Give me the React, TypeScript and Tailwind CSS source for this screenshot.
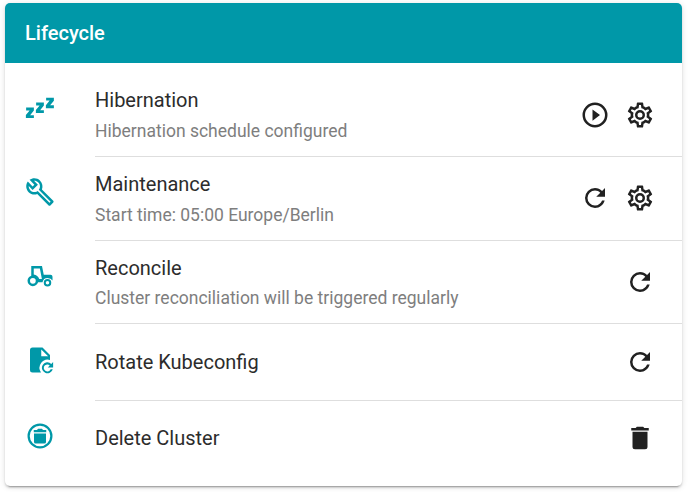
import type { ReactNode } from 'react';

function Icon({ children, className = '' }: { children: ReactNode; className?: string }) {
  return (
    <svg viewBox="0 0 24 24" fill="currentColor" className={`block size-[30px] shrink-0 ${className}`}>
      {children}
    </svg>
  );
}

const Sleep = () => (
  <>
    <path d="M.9 11.6H7.1V14L4.1 17.7H7.1V20H.7V17.6L3.7 13.9H.9Z" />
    <path d="M8.9 7.6H15.1V10L12.1 13.7H15.1V16H8.7V13.6L11.7 9.9H8.9Z" />
    <path d="M16.9 3.7H23.1V6.1L20.1 9.8H23.1V12.1H16.7V9.7L19.7 6H16.9Z" />
  </>
);

const Wrench = () => (
  <path d="M22.61,19L13.53,9.91C14.46,7.57 14,4.81 12.09,2.91C9.79,0.61 6.21,0.4 3.66,2.26L7.5,6.11L6.08,7.52L2.25,3.69C0.39,6.23 0.6,9.82 2.9,12.11C4.76,13.97 7.47,14.46 9.79,13.59L18.9,22.7C19.29,23.09 19.92,23.09 20.31,22.7L22.61,20.4C23,20 23,19.39 22.61,19M19.61,20.59L10.15,11.13C9.54,11.58 8.86,11.85 8.15,11.95C6.79,12.15 5.36,11.74 4.32,10.7C3.37,9.76 2.93,8.5 3,7.26L6.09,10.35L10.33,6.11L7.24,3C8.5,2.95 9.73,3.39 10.68,4.33C11.76,5.41 12.17,6.9 11.92,8.29C11.8,9 11.5,9.66 11.04,10.25L20.5,19.7L19.61,20.59Z" />
);

const Tractor = () => (
  <>
    <path d="M5 4H13.6L15 11H20.4Q22 11 22 12.6V15.5Q20.8 13.5 18 13.5Q14.7 13.5 14 17H10V15Q9.4 12 5 12Z M7 6V10.8Q10.2 11.2 11.4 14.4H13.5L11.9 6Z" fillRule="evenodd" />
    <circle cx="6.3" cy="15.8" r="3.3" fill="none" stroke="currentColor" strokeWidth="2" />
    <circle cx="18" cy="17.3" r="2.2" fill="none" stroke="currentColor" strokeWidth="1.6" />
  </>
);

const FileRefresh = () => (
  <>
    <path d="M6 2H14L20 8V11.9A6.6 6.6 0 0 0 12.8 22H6Q4 22 4 20V4Q4 2 6 2M13 3.5V9H18.5Z" fillRule="evenodd" />
    <path d="M21 15.1A4.4 4.4 0 1 0 22.2 19.3H20.5A2.8 2.8 0 1 1 19.8 16.3L18.2 17.9H22.5V13.6Z" />
  </>
);

const DeleteCircle = () => (
  <>
    <circle cx="12" cy="12" r="9.1" fill="none" stroke="currentColor" strokeWidth="1.8" />
    <path d="M7 7.1H9.6L10.4 6.2H13.6L14.4 7.1H17V9H7ZM7.2 10H16.8V16.8Q16.8 18 15.6 18H8.4Q7.2 18 7.2 16.8Z" />
  </>
);

const Play = () => (
  <path d="M12,20C7.59,20 4,16.41 4,12C4,7.59 7.59,4 12,4C16.41,4 20,7.59 20,12C20,16.41 16.41,20 12,20M12,2A10,10 0 0,0 2,12A10,10 0 0,0 12,22A10,10 0 0,0 22,12A10,10 0 0,0 12,2M10,16.5L16,12L10,7.5V16.5Z" />
);

const Refresh = () => (
  <path d="M17.65,6.35C16.2,4.9 14.21,4 12,4A8,8 0 0,0 4,12A8,8 0 0,0 12,20C15.73,20 18.84,17.45 19.73,14H17.65C16.83,16.33 14.61,18 12,18A6,6 0 0,1 6,12A6,6 0 0,1 12,6C13.66,6 15.14,6.69 16.22,7.78L13,11H20V4L17.65,6.35Z" />
);

const Cog = () => (
  <path d="M12,8A4,4 0 0,1 16,12A4,4 0 0,1 12,16A4,4 0 0,1 8,12A4,4 0 0,1 12,8M12,10A2,2 0 0,0 10,12A2,2 0 0,0 12,14A2,2 0 0,0 14,12A2,2 0 0,0 12,10M10,22C9.75,22 9.54,21.82 9.5,21.58L9.13,18.93C8.5,18.68 7.96,18.34 7.44,17.94L4.95,18.95C4.73,19.03 4.46,18.95 4.34,18.73L2.34,15.27C2.21,15.05 2.27,14.78 2.46,14.63L4.57,12.97L4.5,12L4.57,11L2.46,9.37C2.27,9.22 2.21,8.95 2.34,8.73L4.34,5.27C4.46,5.05 4.73,4.96 4.95,5.05L7.44,6.05C7.96,5.66 8.5,5.32 9.13,5.07L9.5,2.42C9.54,2.18 9.75,2 10,2H14C14.25,2 14.46,2.18 14.5,2.42L14.87,5.07C15.5,5.32 16.04,5.66 16.56,6.05L19.05,5.05C19.27,4.96 19.54,5.05 19.66,5.27L21.66,8.73C21.79,8.95 21.73,9.22 21.54,9.37L19.43,11L19.5,12L19.43,13L21.54,14.63C21.73,14.78 21.79,15.05 21.66,15.27L19.66,18.73C19.54,18.95 19.27,19.04 19.05,18.95L16.56,17.95C16.04,18.34 15.5,18.68 14.87,18.93L14.5,21.58C14.46,21.82 14.25,22 14,22H10M11.25,4L10.88,6.61C9.68,6.86 8.62,7.5 7.85,8.39L5.44,7.35L4.69,8.65L6.8,10.2C6.4,11.37 6.4,12.64 6.8,13.8L4.68,15.36L5.43,16.66L7.86,15.62C8.63,16.5 9.68,17.14 10.87,17.38L11.24,20H12.76L13.13,17.39C14.32,17.14 15.37,16.5 16.14,15.62L18.57,16.66L19.32,15.36L17.2,13.81C17.6,12.64 17.6,11.37 17.2,10.2L19.31,8.65L18.56,7.35L16.15,8.39C15.38,7.5 14.32,6.86 13.12,6.62L12.75,4H11.25Z" />
);

const Trash = () => (
  <path d="M19,4H15.5L14.5,3H9.5L8.5,4H5V6H19M6,19A2,2 0 0,0 8,21H16A2,2 0 0,0 18,19V7H6V19Z" />
);

interface RowProps {
  icon: ReactNode;
  title: string;
  subtitle?: string;
  subtitleGap?: string;
  actions: ReactNode;
  height: string;
  iconPad: string;
  textPad: string;
  actionPad: string;
  last?: boolean;
}

function Row({ icon, title, subtitle, subtitleGap = 'mt-[7px]', actions, height, iconPad, textPad, actionPad, last }: RowProps) {
  return (
    <li className={`flex pl-5 ${height}`}>
      <div className={`w-[70px] shrink-0 text-[#0098a8] ${iconPad}`}>
        <Icon>{icon}</Icon>
      </div>
      <div className={`flex grow justify-between ${last ? '' : 'border-b border-[#dedede]'}`}>
        <div className={textPad}>
          <div className="text-[20px] leading-6 text-[#2c2c2c]">{title}</div>
          {subtitle && <div className={`text-[17.5px] leading-6 text-[#7e7e7e] ${subtitleGap}`}>{subtitle}</div>}
        </div>
        <div className={`flex gap-[15px] pr-[27px] text-[#212121] ${actionPad}`}>{actions}</div>
      </div>
    </li>
  );
}

export default function App() {
  return (
    <main className="h-[492px] w-[688px] bg-white pt-[3px] pl-[5px] font-[Roboto,sans-serif]">
      <section className="h-[483px] w-[677px] overflow-hidden rounded-[5px] bg-white shadow-[0_4px_1px_-3px_rgba(0,0,0,0.2),0_2px_2px_0_rgba(0,0,0,0.14),0_1px_6px_0_rgba(0,0,0,0.12)]">
        <h2 className="flex h-[60px] items-center bg-[#0098a8] pl-5 text-[20px] font-medium text-white">Lifecycle</h2>
        <ul>
          <Row
            icon={<Sleep />}
            title="Hibernation"
            subtitle="Hibernation schedule configured"
            actions={<><Icon><Play /></Icon><Icon><Cog /></Icon></>}
            height="h-[94px]"
            iconPad="pt-[30px]"
            textPad="pt-[25px]"
            actionPad="pt-[37px]"
          />
          <Row
            icon={<Wrench />}
            title="Maintenance"
            subtitle="Start time: 05:00 Europe/Berlin"
            actions={<><Icon><Refresh /></Icon><Icon><Cog /></Icon></>}
            height="h-[84px]"
            iconPad="pt-5"
            textPad="pt-[15px]"
            actionPad="pt-[26px]"
          />
          <Row
            icon={<Tractor />}
            title="Reconcile"
            subtitle="Cluster reconciliation will be triggered regularly"
            subtitleGap="mt-1.5"
            actions={<Icon><Refresh /></Icon>}
            height="h-[83px]"
            iconPad="pt-5"
            textPad="pt-[15px]"
            actionPad="pt-[26px]"
          />
          <Row
            icon={<FileRefresh />}
            title="Rotate Kubeconfig"
            actions={<Icon><Refresh /></Icon>}
            height="h-[77px]"
            iconPad="pt-[21px]"
            textPad="pt-[26px]"
            actionPad="pt-[23px]"
          />
          <Row
            icon={<DeleteCircle />}
            title="Delete Cluster"
            actions={<Icon><Trash /></Icon>}
            height="h-[85px]"
            iconPad="pt-5"
            textPad="pt-[25px]"
            actionPad="pt-[22px]"
            last
          />
        </ul>
      </section>
    </main>
  );
}
